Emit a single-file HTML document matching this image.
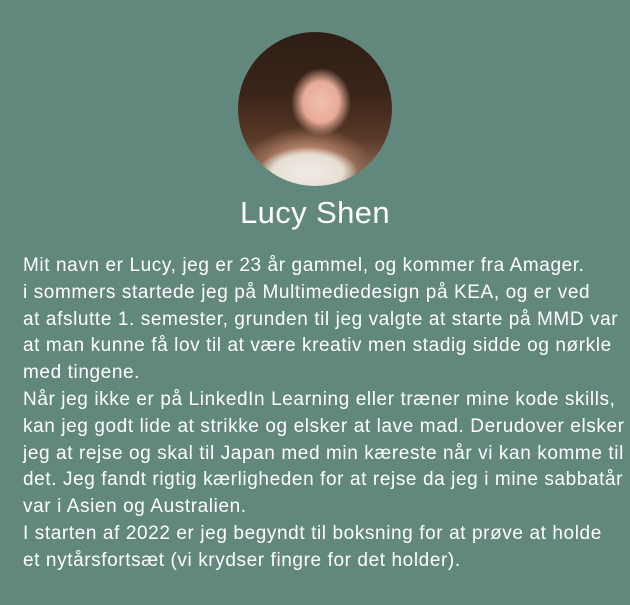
<!DOCTYPE html>
<html><head><meta charset="utf-8"><style>
html,body{margin:0;padding:0;width:630px;height:605px;background:#62887e;overflow:hidden}
body{font-family:"Liberation Sans","DejaVu Sans",sans-serif;color:#fff}
.av{position:absolute;left:238px;top:32px;width:154px;height:154px;border-radius:50%;overflow:hidden;
background:radial-gradient(ellipse 30px 34px at 83px 70px,#f1bfae 0,#e8ab98 60%,rgba(0,0,0,0) 100%),
radial-gradient(ellipse 50px 25px at 70px 140px,#f0ece6 0,#e6dfd4 70%,rgba(0,0,0,0) 100%),
radial-gradient(ellipse 60px 30px at 70px 125px,#d99e86 0,rgba(0,0,0,0) 100%),
linear-gradient(180deg,#2e1e16 0,#3a2418 40%,#5a3a28 70%,#a8806a 100%)}
h1{position:absolute;left:0;width:630px;top:195px;margin:0;text-align:center;font-weight:normal;font-size:31px;letter-spacing:0.4px;line-height:36px}
p{position:absolute;left:23px;top:253px;margin:0;font-size:19px;letter-spacing:0.6px;line-height:26.8px;white-space:nowrap}
</style></head><body>
<div class="av"></div>
<h1>Lucy Shen</h1>
<p>Mit navn er Lucy, jeg er 23 år gammel, og kommer fra Amager.<br>
i sommers startede jeg på Multimediedesign på KEA, og er ved<br>
at afslutte 1. semester, grunden til jeg valgte at starte på MMD var<br>
at man kunne få lov til at være kreativ men stadig sidde og nørkle<br>
med tingene.<br>
Når jeg ikke er på LinkedIn Learning eller træner mine kode skills,<br>
kan jeg godt lide at strikke og elsker at lave mad. Derudover elsker<br>
jeg at rejse og skal til Japan med min kæreste når vi kan komme til<br>
det. Jeg fandt rigtig kærligheden for at rejse da jeg i mine sabbatår<br>
var i Asien og Australien.<br>
I starten af 2022 er jeg begyndt til boksning for at prøve at holde<br>
et nytårsfortsæt (vi krydser fingre for det holder).</p>
</body></html>
